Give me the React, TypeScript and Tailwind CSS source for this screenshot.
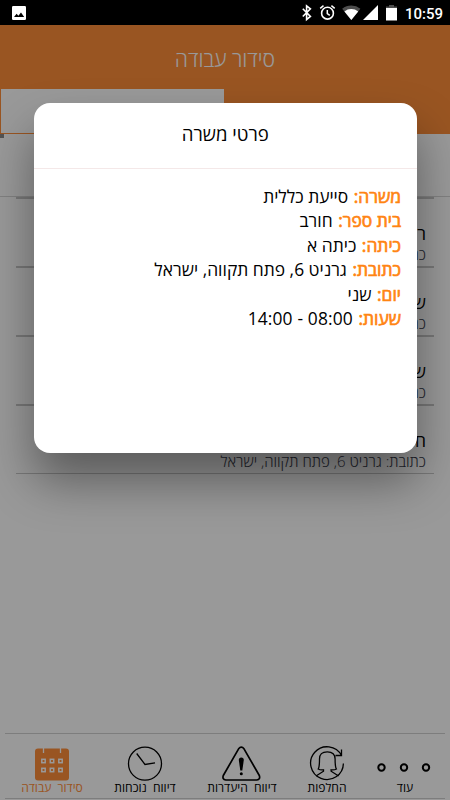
import React from 'react';
import type { ReactNode } from 'react';

const details = [
    { label: 'משרה:', value: 'סייעת כללית' },
    { label: 'בית ספר:', value: 'חורב' },
    { label: 'כיתה:', value: 'כיתה א' },
    { label: 'כתובת:', value: 'גרניט 6, פתח תקווה, ישראל' },
    { label: 'יום:', value: 'שני' },
    { label: 'שעות:', value: '08:00 - 14:00', className: 'tracking-[0.15px]' },
];

const jobs = ['ראשי', 'שרת', 'שרת', 'חורב'];

const StatusBar: React.FC = () => (
    <div className="flex h-[25px] items-center bg-black pl-3 text-white">
        <svg width="14" height="14" viewBox="0 0 14 14" className="mt-px">
            <rect width="14" height="14" rx="1.2" fill="#fff" />
            <path d="M2 11l2.6-3.3 1.8 2.1 2.6-3.4 3.2 4.6z" fill="#000" />
        </svg>
        <svg width="96" height="25" viewBox="0 0 96 25" className="ml-auto" fill="none">
            <path d="M1.8 8.8l7.6 7.7-3.8 3V5.8l3.8 3-7.6 7.7" stroke="#fff" strokeWidth="1.6" />
            <circle cx="26.5" cy="13.2" r="5.9" stroke="#fff" strokeWidth="1.6" />
            <path d="M26.3 10v3.7l2.5 1.7M19.2 8.4l3.3-2.7M33.7 8.4l-3.3-2.7" stroke="#fff" strokeWidth="1.5" />
            <path d="M50.3 20L41.2 8.7a14.6 14.6 0 0 1 18.2 0z" fill="#4d4d4d" />
            <path d="M50.3 20l-6.9-8.6a11 11 0 0 1 13.8 0z" fill="#fff" />
            <path d="M62 20h15V5z" fill="#fff" />
            <path d="M85 8V6.5h3V5h5v1.5h3V8z" fill="#4d4d4d" />
            <path d="M85 8h11v12.5H85z" fill="#fff" />
        </svg>
        <span className="ml-2 mt-[3px] w-[45px] font-['Roboto',sans-serif] text-[15px] font-medium leading-none">10:59</span>
    </div>
);

const NavItem: React.FC<{ label: string; className: string; children: ReactNode }> = ({ label, className, children }) => (
    <div className={`flex flex-col items-center ${className}`}>
        <div className="flex h-9 items-center">{children}</div>
        <span className="-mt-px whitespace-nowrap text-[12.1px] leading-[14px] [word-spacing:3px]">{label}</span>
    </div>
);

const CalendarIcon = () => (
    <svg width="36" height="36" viewBox="0 0 36 36">
        <rect x="1" y="2.5" width="34" height="32" rx="3" fill="#ff8e39" />
        <path d="M9.500 0v7M26.500 0v7" stroke="#fff" strokeWidth="1.3" />
        {[9.5, 18, 26.5].map((x) =>
            [15, 24].map((y) => (
                <rect key={`${x}-${y}`} x={x - 1.7} y={y - 1.7} width="3.4" height="3.4" fill="none" stroke="#fff" strokeWidth="1.5" />
            ))
        )}
    </svg>
);

const ClockIcon = () => (
    <svg width="36" height="36" viewBox="0 0 36 36" fill="none" stroke="#000" strokeWidth="1.3">
        <circle cx="18" cy="17.7" r="16.5" />
        <path d="M9.7 7.5L18 18.5l10-1.6" />
    </svg>
);

const WarningIcon = () => (
    <svg width="40" height="36" viewBox="0.7 0 40 36" fill="none">
        <path d="M17.300 2.800Q20 -.6 22.700 2.800L38 29.500Q39.300 33.500 35.500 34H4.500Q.7 33.500 2 29.500z" stroke="#000" strokeWidth="1.7" strokeLinejoin="round" />
        <path d="M17.5 14q0-2.500 2.500-2.500t2.500 2.500l-1.500 10.500h-2z" fill="#000" />
        <circle cx="20" cy="27.8" r="1.5" fill="#000" />
    </svg>
);

const SwapIcon = () => (
    <svg width="36" height="36" viewBox="0 0 36 36" fill="none" stroke="#000" strokeWidth="1.3">
        <path d="M32.500 9.500A16.400 16.400 0 1 0 34.400 17.500M32.500 3.500v6h-6" />
        <path d="M7 30l7.500-4.800v-1.400c-2 .3-4 0-5.300-.8 1.300-2 1.300-5 1.300-10C10.500 8 13 5.800 18.300 5.800s7.800 2.200 7.800 7.200c0 5 0 8 1.300 10-1.300.8-3.300 1.100-5.300.8v1.400l7.500 4.800" />
    </svg>
);

const DotsIcon = () => (
    <svg width="56" height="36" viewBox="0 0 56 36" fill="none" stroke="#000" strokeWidth="2">
        <circle cx="4.500" cy="21.5" r="3.2" />
        <circle cx="27" cy="21.5" r="3.2" />
        <circle cx="49" cy="21.5" r="3.2" />
    </svg>
);

const App: React.FC = () => {
    return (
        <div dir="ltr" className="relative flex h-[800px] w-[450px] flex-col overflow-hidden bg-white font-['Open_Sans','Noto_Sans',sans-serif] text-black">
            <StatusBar />
            <header dir="rtl" className="flex h-16 items-center justify-center bg-[#ff8e39] pt-[3px] text-[21.2px] font-light text-white">סידור עבודה</header>

            {/* Tabs */}
            <div className="flex h-[45px] bg-[#ff8e39]">
                <div className="w-[225px] border border-t-0 border-[#ff8e39] bg-white" />
            </div>
            <div className="h-[63px] border-b border-[#d8d8d8]">
                <div className="size-1 bg-[#8a8a8a]" />
            </div>

            {/* Jobs list */}
            <main dir="rtl" className="mx-4 flex-1 border-t-2 border-[#c8c8c8]">
                {jobs.map((name, i) => (
                    <div key={i} className="h-[69px] border-b-2 border-[#c8c8c8] px-2 pt-[23px] last:h-[68px] last:border-b">
                        <p className="text-[17.5px] leading-[22px]">{name}</p>
                        <p className="text-[15px] font-light leading-[20px] text-[#3a3d4c]">כתובת: גרניט 6, פתח תקווה, ישראל</p>
                    </div>
                ))}
            </main>

            {/* Bottom navigation */}
            <nav className="mx-[5px] mb-px flex h-[66px] gap-[31px] border-y border-[#d0d0d0] pl-4 pt-3">
                <NavItem label="סידור עבודה" className="w-[62px] text-[#ff8e39]"><CalendarIcon /></NavItem>
                <NavItem label="דיווח נוכחות" className="w-[62px]"><ClockIcon /></NavItem>
                <NavItem label="דיווח היעדרות" className="w-[70px]"><WarningIcon /></NavItem>
                <NavItem label="החלפות" className="w-[38px]"><SwapIcon /></NavItem>
                <NavItem label="עוד" className="w-14"><DotsIcon /></NavItem>
            </nav>

            {/* Job details dialog */}
            <div className="absolute inset-x-0 bottom-0 top-[25px] bg-black/40 pl-[34px] pt-[78px]">
                <div dir="rtl" className="h-[349.5px] w-[382.5px] rounded-[16px] bg-white shadow-[0_28px_48px_rgba(0,0,0,0.4)]">
                    <h2 className="flex h-[66px] items-center justify-center border-b border-[#f4e8e8] pb-[3px] text-[18.6px]">פרטי משרה</h2>
                    <div className="px-[15.5px] pt-[15px] text-[17.4px] leading-[24.4px]">
                        {details.map((d) => (
                            <p key={d.label}>
                                <span className="ml-px text-[#ff8412] [-webkit-text-stroke:0.7px_#ff8412]">{d.label}</span>{' '}
                                <span className={d.className}>{d.value}</span>
                            </p>
                        ))}
                    </div>
                </div>
            </div>
        </div>
    );
};

export default App;
